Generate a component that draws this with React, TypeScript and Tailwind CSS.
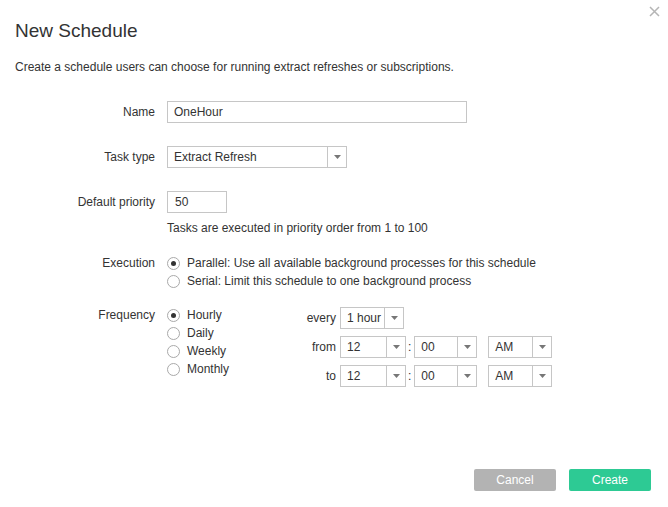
import React from 'react';

// small dropdown caret used by every select box
function Caret() {
  return (
    <svg width="7" height="4" viewBox="0 0 7 4">
      <path d="M0 0h7L3.5 4z" fill="#777" />
    </svg>
  );
}

function Select({ value, width }: { value: string; width: string }) {
  return (
    <div className={`flex h-[22px] items-stretch border border-[#c6c6c6] bg-white ${width}`}>
      <span className="flex-1 whitespace-nowrap pl-[6px] leading-[20px]">{value}</span>
      <span className="flex w-[19px] items-center justify-center border-l border-[#c6c6c6]">
        <Caret />
      </span>
    </div>
  );
}

function Radio({ checked, label }: { checked?: boolean; label: string }) {
  return (
    <div className="flex h-[18px] items-center gap-[7px]">
      <span className="flex h-[13px] w-[13px] items-center justify-center rounded-full border border-[#a9a9a9] bg-white">
        {checked && <span className="h-[5px] w-[5px] rounded-full bg-[#333]" />}
      </span>
      <span>{label}</span>
    </div>
  );
}

function Row({ label, children, className = '' }: { label: string; children: React.ReactNode; className?: string }) {
  return (
    <div className={`grid grid-cols-[140px_1fr] gap-x-3 ${className}`}>
      <div className="text-right leading-[22px]">{label}</div>
      <div>{children}</div>
    </div>
  );
}

function TimeRow({ label }: { label: string }) {
  return (
    <div className="flex items-center">
      <span className="mr-[4px] w-[36px] text-right">{label}</span>
      <Select value="12" width="w-[66px]" />
      <span className="ml-[2px] mr-[3px]">:</span>
      <Select value="00" width="w-[63px]" />
      <span className="w-[11px]" />
      <Select value="AM" width="w-[64px]" />
    </div>
  );
}

export default function App() {
  return (
    <div className="relative flex h-[507px] w-[668px] flex-col bg-white font-['Liberation_Sans',Arial,sans-serif] text-[12px] text-[#333]">
      {/* close button */}
      <button className="absolute right-[8px] top-[6px] p-0">
        <svg width="11" height="11" viewBox="0 0 11 11">
          <path d="M1 1l9 9M10 1l-9 9" stroke="#b5b5b5" strokeWidth="1.5" />
        </svg>
      </button>

      <h1 className="pl-[15px] pt-[18px] text-[19px] leading-[26px] text-[#333]">New Schedule</h1>
      <p className="mt-[15px] pl-[15px] leading-[16px]">
        Create a schedule users can choose for running extract refreshes or subscriptions.
      </p>

      <div className="mt-[26px] pl-[15px]">
        <Row label="Name">
          <div className="h-[22px] w-[300px] border border-[#c6c6c6] pl-[6px] leading-[20px]">OneHour</div>
        </Row>

        <Row label="Task type" className="mt-[23px]">
          <Select value="Extract Refresh" width="w-[180px]" />
        </Row>

        <Row label="Default priority" className="mt-[23px]">
          <div className="h-[22px] w-[60px] border border-[#c6c6c6] pl-[7px] leading-[20px]">50</div>
          <div className="mt-[7px] leading-[16px]">Tasks are executed in priority order from 1 to 100</div>
        </Row>

        <div className="mt-[18px] grid grid-cols-[140px_1fr] gap-x-3">
          <div className="text-right leading-[18px]">Execution</div>
          <div>
            <Radio checked label="Parallel: Use all available background processes for this schedule" />
            <Radio label="Serial: Limit this schedule to one background process" />
          </div>
        </div>

        <div className="mt-[16px] grid grid-cols-[140px_1fr] gap-x-3">
          <div className="text-right leading-[18px]">Frequency</div>
          <div className="flex">
            <div className="w-[133px]">
              <Radio checked label="Hourly" />
              <Radio label="Daily" />
              <Radio label="Weekly" />
              <Radio label="Monthly" />
            </div>
            <div className="mt-[1px] flex flex-col gap-[7px]">
              <div className="flex items-center">
                <span className="mr-[4px] w-[36px] text-right">every</span>
                <Select value="1 hour" width="w-[64px]" />
              </div>
              <TimeRow label="from" />
              <TimeRow label="to" />
            </div>
          </div>
        </div>
      </div>

      <div className="mt-auto flex justify-end gap-[13px] pb-[16px] pr-[17px]">
        <button className="h-[22px] w-[82px] rounded-[2px] bg-[#b3b3b3] text-[12px] text-white">Cancel</button>
        <button className="h-[22px] w-[82px] rounded-[2px] bg-[#2dca94] text-[12px] text-white">Create</button>
      </div>
    </div>
  );
}
